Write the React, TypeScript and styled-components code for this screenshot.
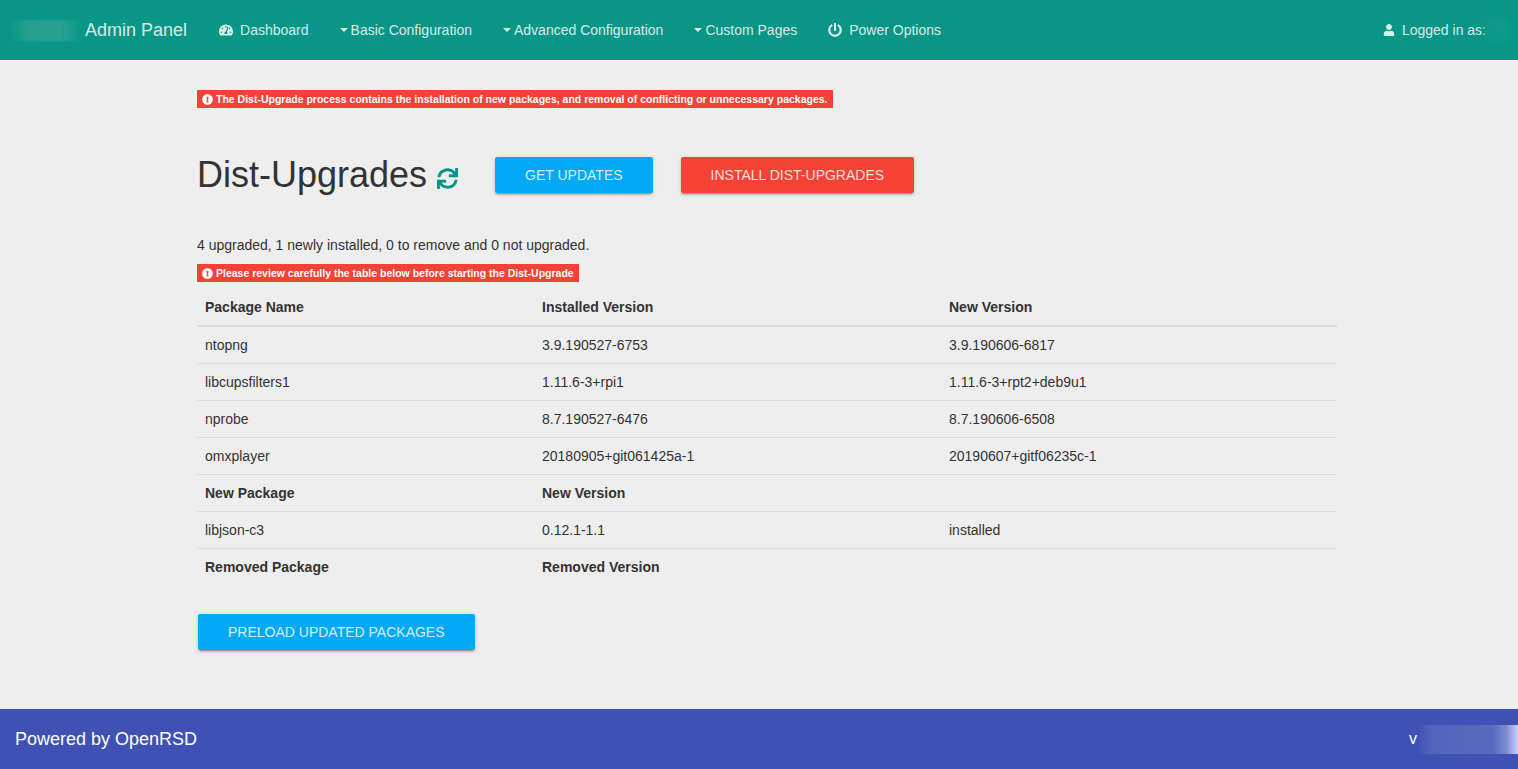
import React from 'react'
import styled, { createGlobalStyle } from 'styled-components'
import { FaExclamationCircle, FaPowerOff, FaSync, FaTachometerAlt, FaUser } from 'react-icons/fa'

const GlobalStyle = createGlobalStyle`
  html, body {
    margin: 0;
    padding: 0;
    background: #eeeeee;
    color: #333;
    font-family: "Liberation Sans", Arial, sans-serif;
    font-size: 14px;
  }
`

const Page = styled.div`
  display: flex;
  flex-direction: column;
  min-height: 769px;
  height: 769px;
  overflow: hidden;
`

const Navbar = styled.nav`
  display: flex;
  align-items: center;
  flex: 0 0 60px;
  height: 60px;
  background: #099686;
  color: rgba(255, 255, 255, 0.84);
  padding: 0 10px 0 10px;
`

const BrandBlur = styled.div`
  width: 70px;
  height: 21px;
  margin-right: 5px;
  background: linear-gradient(90deg, #099686 0%, #259f8f 25%, #2ba393 70%, #0e9888 100%);
  filter: blur(1px);
`

const Brand = styled.span`
  font-size: 18px;
  margin-right: 32px;
`

const NavItem = styled.span`
  display: inline-flex;
  align-items: center;
  font-size: 14px;
  margin-right: 31px;
`

const NavIcon = styled.span`
  display: inline-flex;
  margin-right: 7px;
  font-size: 14px;
`

const Caret = styled.span`
  width: 0;
  height: 0;
  margin-right: 3px;
  border-top: 4px solid currentColor;
  border-left: 4px solid transparent;
  border-right: 4px solid transparent;
`

const NavRight = styled.div`
  display: flex;
  align-items: center;
  margin-left: auto;
  font-size: 14px;
`

const UserBlur = styled.div`
  width: 22px;
  height: 21px;
  background: #0f9a8a;
  filter: blur(2px);
`

const Main = styled.main`
  flex: 1;
  width: 1140px;
  margin-left: 197px;
  padding-top: 30px;
`

const Label = styled.div`
  display: inline-flex;
  align-items: center;
  height: 18px;
  padding: 0 5px;
  background: #f44336;
  color: #fff;
  font-size: 10.5px;
  font-weight: bold;
`

const LabelIcon = styled(FaExclamationCircle)`
  font-size: 11px;
  margin-right: 3px;
`

const Header = styled.div`
  display: flex;
  align-items: center;
  margin-top: 47px;
`

const Title = styled.h1`
  margin: 0;
  font-size: 36px;
  line-height: 40px;
  font-weight: 400;
  color: #333;
`

const RefreshIcon = styled(FaSync)`
  font-size: 21px;
  color: #009688;
  margin: 6px 37px 0 10px;
`

const Button = styled.button<{ $color: string; $gap?: number }>`
  height: 36px;
  padding: 0 30px;
  margin-right: ${p => p.$gap ?? 28}px;
  border: none;
  border-radius: 2px;
  background: ${p => p.$color};
  color: rgba(255, 255, 255, 0.84);
  font-family: inherit;
  font-size: 14px;
  text-transform: uppercase;
  box-shadow: 0 2px 2px 0 rgba(0, 0, 0, 0.14), 0 3px 1px -2px rgba(0, 0, 0, 0.2), 0 1px 5px 0 rgba(0, 0, 0, 0.12);
`

const Summary = styled.p`
  margin: 42px 0 0;
  font-size: 14px;
  line-height: 16px;
`

const SecondLabel = styled(Label)`
  margin-top: 11px;
  display: flex;
  width: fit-content;
`

const Table = styled.table`
  width: 1140px;
  margin-top: 7px;
  border-collapse: collapse;
  table-layout: fixed;
  font-size: 14px;
`

const HeadCell = styled.th`
  height: 37px;
  padding: 0 8px;
  box-sizing: border-box;
  text-align: left;
  font-weight: bold;
  color: #333;
`

const Cell = styled.td`
  height: 37px;
  padding: 0 8px;
  box-sizing: border-box;
  border-top: 1px solid #ddd;
`

const BoldCell = styled(Cell)`
  font-weight: bold;
`

const HeadRow = styled.tr`
  border-bottom: 2px solid #ddd;
`

const PreloadRow = styled.div`
  margin-top: 29px;
  margin-left: 1px;
`

const Footer = styled.footer`
  display: flex;
  align-items: center;
  justify-content: space-between;
  flex: 0 0 60px;
  background: #3f51b5;
  color: #fff;
  font-size: 18px;
  padding-left: 15px;
`

const Version = styled.div`
  display: flex;
  align-items: center;
  font-size: 16px;
`

const VersionBlur = styled.div`
  width: 100px;
  height: 29px;
  margin-left: 1px;
  background: linear-gradient(90deg, #3f51b5 0%, #5263bc 12%, #5a6abf 75%, #7d8ad0 88%, #c8d2ff 100%);
`

const packages = [
  ['ntopng', '3.9.190527-6753', '3.9.190606-6817'],
  ['libcupsfilters1', '1.11.6-3+rpi1', '1.11.6-3+rpt2+deb9u1'],
  ['nprobe', '8.7.190527-6476', '8.7.190606-6508'],
  ['omxplayer', '20180905+git061425a-1', '20190607+gitf06235c-1'],
]

const App: React.FC = () => {
  return (
    <Page>
      <GlobalStyle />
      <Navbar>
        <BrandBlur />
        <Brand>Admin Panel</Brand>
        <NavItem><NavIcon><FaTachometerAlt /></NavIcon>Dashboard</NavItem>
        <NavItem><Caret />Basic Configuration</NavItem>
        <NavItem><Caret />Advanced Configuration</NavItem>
        <NavItem><Caret />Custom Pages</NavItem>
        <NavItem><NavIcon><FaPowerOff /></NavIcon>Power Options</NavItem>
        <NavRight>
          <NavIcon><FaUser size={12} /></NavIcon>
          Logged in as:
          <UserBlur />
        </NavRight>
      </Navbar>
      <Main>
        <Label>
          <LabelIcon />
          The Dist-Upgrade process contains the installation of new packages, and removal of conflicting or unnecessary packages.
        </Label>
        <Header>
          <Title>Dist-Upgrades</Title>
          <RefreshIcon />
          <Button $color="#03a9f4">Get Updates</Button>
          <Button $color="#f44336">Install Dist-Upgrades</Button>
        </Header>
        <Summary>4 upgraded, 1 newly installed, 0 to remove and 0 not upgraded.</Summary>
        <SecondLabel>
          <LabelIcon />
          Please review carefully the table below before starting the Dist-Upgrade
        </SecondLabel>
        <Table>
          <colgroup>
            <col width="337" />
            <col width="407" />
            <col width="396" />
          </colgroup>
          <thead>
            <HeadRow>
              <HeadCell>Package Name</HeadCell>
              <HeadCell>Installed Version</HeadCell>
              <HeadCell>New Version</HeadCell>
            </HeadRow>
          </thead>
          <tbody>
            {packages.map(row => (
              <tr key={row[0]}>
                <Cell>{row[0]}</Cell>
                <Cell>{row[1]}</Cell>
                <Cell>{row[2]}</Cell>
              </tr>
            ))}
            <tr>
              <BoldCell>New Package</BoldCell>
              <BoldCell>New Version</BoldCell>
              <BoldCell />
            </tr>
            <tr>
              <Cell>libjson-c3</Cell>
              <Cell>0.12.1-1.1</Cell>
              <Cell>installed</Cell>
            </tr>
            <tr>
              <BoldCell>Removed Package</BoldCell>
              <BoldCell>Removed Version</BoldCell>
              <BoldCell />
            </tr>
          </tbody>
        </Table>
        <PreloadRow>
          <Button $color="#03a9f4" $gap={0}>Preload Updated Packages</Button>
        </PreloadRow>
      </Main>
      <Footer>
        Powered by OpenRSD
        <Version>v<VersionBlur /></Version>
      </Footer>
    </Page>
  )
}

export default App
